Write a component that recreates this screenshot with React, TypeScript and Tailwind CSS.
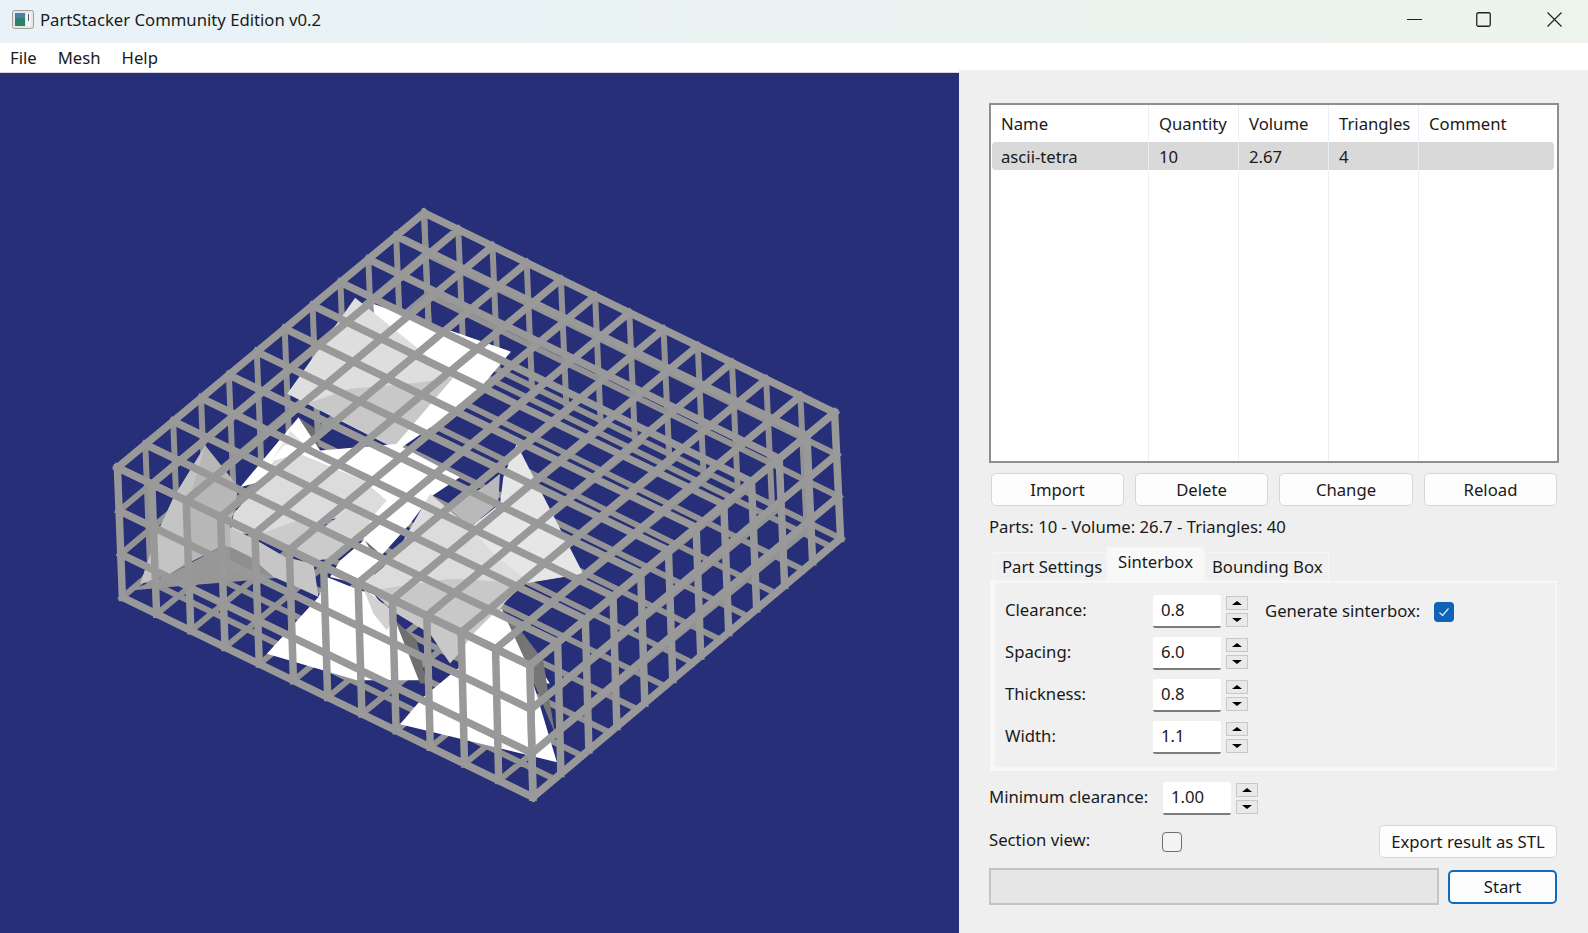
import React from "react";

type P = [number, number];
const mix = (a: P, b: P, t: number): P => [a[0] + (b[0] - a[0]) * t, a[1] + (b[1] - a[1]) * t];

// Draws the bars of one face of the wire cage: a→b is the u edge, d→c the opposite one.
function faceBars(a: P, b: P, c: P, d: P, nu: number, nv: number) {
  const out: string[] = [];
  for (let i = 0; i <= nu; i++) {
    const p = mix(a, b, i / nu);
    const q = mix(d, c, i / nu);
    out.push(`M${p[0]} ${p[1]}L${q[0]} ${q[1]}`);
  }
  for (let j = 0; j <= nv; j++) {
    const p = mix(a, d, j / nv);
    const q = mix(b, c, j / nv);
    out.push(`M${p[0]} ${p[1]}L${q[0]} ${q[1]}`);
  }
  return out.join("");
}

const A: P = [424, 212], B: P = [835, 412], C: P = [530, 665], D: P = [117, 467];
const A2: P = [429, 335], B2: P = [841, 538], C2: P = [533, 797], D2: P = [122, 597];
const A3: P = [422.6, 345.4], B3: P = [831.6, 546.4], C3: P = [526.6, 802], D3: P = [116, 602];

// left part, in 3x coordinates of the area starting at (120,430)
const leftShapes: [string, string][] = [
  ["#b7b7b7", "255,45 355,170 330,290 500,440 390,370 310,345 220,390 150,430 60,460 110,310 160,200"],
  ["#c4c4c4", "255,45 160,200 110,310 60,460 150,430 190,400 200,230"],
  ["#979797", "30,480 150,430 310,345 390,370 500,440 330,455 200,465"],
];

// centre part, in 3x coordinates of the area starting at (230,400)
const centreShapes: [string, string][] = [
  ["#ffffff", "205,50 30,260 100,240 400,250 400,420 450,470 540,370 600,290 690,230 640,205 500,130 270,150"],
  ["#e4e4e4", "180,90 215,125 160,135 125,180"],
  ["#ffffff", "300,530 330,480 400,420 450,470 420,560"],
  ["#dcdcdc", "100,240 130,180 210,160 400,240 470,300 430,345 330,350 130,400 0,400 10,340 60,280"],
  ["#d6d6d6", "280,380 350,330 430,345 400,400 340,440"],
  ["#cbcbcb", "90,400 200,360 300,395 340,440 330,470 260,480 200,450"],
  ["#c6c6c6", "0,380 80,420 165,470 250,490 265,590 200,560 130,530 60,470 0,440"],
  ["#8f8f8f", "0,440 60,470 130,530 60,510 0,490"],
  ["#6f6f6f", "205,50 250,80 270,150"],
  ["#6f6f6f", "405,420 450,460 425,455"],
  // right part
  ["#dcdcdc", "600,280 720,380 1060,520 880,550 830,600 770,680 710,720 640,640 400,550 460,500 520,420"],
  ["#c8c8c8", "420,570 660,535 770,540 880,550 810,620 740,700 660,790 600,700 500,640"],
  ["#e6e6e6", "860,130 1060,520 900,545 800,470 720,380 810,310 820,230"],
  ["#b9b9b9", "810,220 805,310 720,380 650,320 760,260"],
  // front white parts
  ["#ffffff", "265,590 110,760 380,840 570,840 510,680 430,580 390,570 290,530"],
  ["#ffffff", "730,700 790,640 815,625 960,850 690,840 700,740"],
  ["#d2d2d2", "400,565 500,640 470,690 430,640"],
  ["#6f6f6f", "495,660 560,720 590,850 570,850"],
  ["#747474", "815,625 880,700 940,780 950,850 890,790"],
];

// lower right part, full-size coordinates
const frontShapes: [string, string][] = [
  ["#ffffff", "480,650 513,640 530,672 557,762 400,724 423,697"],
  ["#767676", "520,633 543,660 555,733 530,673"],
];

function Cage() {
  const floorLines: string[] = [];
  for (let k = 1; k <= 11; k++) {
    const p = mix(D3, A3, k / 11);
    const q = mix(C3, B3, k / 11);
    floorLines.push(`M${p[0]} ${p[1]}L${q[0]} ${q[1]}`);
  }
  for (let i = 1; i <= 11; i++) {
    const p = mix(D2, C2, i / 12);
    const q = mix(A2, B2, i / 12);
    floorLines.push(`M${p[0]} ${p[1]}L${q[0] + 7} ${q[1] + 3.5}`);
  }
  return (
    <svg viewBox="0 72 959 861" className="block w-full h-full">
      <g fill="none" stroke="#939393" strokeWidth={6} strokeLinecap="square">
        <path d={floorLines.join("")} />
        <path d={faceBars(A, D, D2, A2, 11, 3)} />
        <path d={faceBars(A, B, B2, A2, 12, 3)} />
      </g>
      <g transform="translate(120 430) scale(0.3333)">
        {leftShapes.map(([fill, pts], i) => (
          <polygon key={i} fill={fill} points={pts} />
        ))}
      </g>
      <g transform="translate(285 300)">
        <polygon fill="#ffffff" points="88,3 226,51 185,100 112,150 95,120" />
        <polygon fill="#dedede" points="70,-3 132,47 168,77 108,147 2,93" />
        <polygon fill="#c8c8c8" points="65,88 132,82 168,77 108,147 22,103" />
      </g>
      <g transform="translate(230 400) scale(0.3333)">
        {centreShapes.map(([fill, pts], i) => (
          <polygon key={i} fill={fill} points={pts} />
        ))}
      </g>
      {frontShapes.map(([fill, pts], i) => (
        <polygon key={i} fill={fill} points={pts} />
      ))}
      <g fill="none" stroke="#999999" strokeWidth={7.5} strokeLinecap="square">
        <path d={faceBars(D, C, C2, D2, 12, 3)} />
        <path d={faceBars(C, B, B2, C2, 11, 3)} />
        <path d={faceBars(A, B, C, D, 12, 11)} />
      </g>
    </svg>
  );
}

function Spin({ value }: { value: string }) {
  return (
    <div className="flex gap-[5px] h-[33px]">
      <div className="w-[68px] h-[33px] bg-white border-b-2 border-[#7c7c7c] rounded-[2px] pl-[8px] leading-[29px]">{value}</div>
      <div className="w-[22px] flex flex-col justify-between h-[31px] mt-[1px]">
        <div className="h-[14px] bg-[#e9e9e9] border border-[#c8c8c8] flex items-center justify-center">
          <div className="w-0 h-0 border-x-[5px] border-x-transparent border-b-[4px] border-b-black" />
        </div>
        <div className="h-[14px] bg-[#e9e9e9] border border-[#c8c8c8] flex items-center justify-center">
          <div className="w-0 h-0 border-x-[5px] border-x-transparent border-t-[4px] border-t-black" />
        </div>
      </div>
    </div>
  );
}

function Btn({ label, className }: { label: string; className: string }) {
  return (
    <div className={`h-[33px] bg-[#fdfdfd] border border-[#d6d6d6] rounded-[5px] flex items-center justify-center ${className}`}>
      {label}
    </div>
  );
}

function Column({ width, head, cell, last, first }: { width: string; head: string; cell: string; last?: boolean; first?: boolean }) {
  return (
    <div className={`${width} h-full ${last ? "" : "border-r border-[#e9eff6]"}`}>
      <div className={`h-[37px] flex items-center ${first ? "pl-[9px]" : "pl-[10px]"}`}>{head}</div>
      <div className={`h-[28px] pt-[1px] flex items-center bg-[#d9d9d9] ${first ? "pl-[9px] rounded-l-[4px]" : "pl-[10px]"} ${last ? "rounded-r-[4px]" : ""}`}>{cell}</div>
    </div>
  );
}

export default function App() {
  return (
    <div className="w-[1588px] h-[933px] flex flex-col overflow-hidden bg-[#efefef] text-[16.7px] text-[#1a1a1a] font-['Noto_Sans',sans-serif]">
      <div className="h-[43px] shrink-0 flex items-center bg-gradient-to-r from-[#e8f2f8] to-[#edf4ec] pb-[4px]">
        <svg width="22" height="19" viewBox="0 0 22 19" className="ml-[12px]">
          <rect x="0.5" y="0.5" width="21" height="18" rx="2" fill="#e6e6e6" stroke="#a0a0a0" />
          <rect x="3" y="3" width="10" height="13" fill="#2f7f6f" />
          <rect x="3" y="3" width="10" height="5" fill="#4a7fa8" />
          <rect x="14" y="3" width="5" height="13" fill="#f7f7f7" />
          <rect x="16" y="4" width="1" height="7" fill="#555" />
        </svg>
        <span className="ml-[6px]">PartStacker Community Edition v0.2</span>
        <div className="ml-auto flex items-center mr-[26px]">
          <svg width="15" height="15" viewBox="0 0 15 15"><path d="M0 7.5H15" stroke="#222" strokeWidth="1" /></svg>
          <svg width="15" height="15" viewBox="0 0 15 15" className="ml-[54px]"><rect x="0.75" y="0.75" width="13.5" height="13.5" rx="1.5" fill="none" stroke="#222" strokeWidth="1.3" /></svg>
          <svg width="15" height="15" viewBox="0 0 15 15" className="ml-[56px]"><path d="M0.5 0.5L14.5 14.5M14.5 0.5L0.5 14.5" stroke="#222" strokeWidth="1.2" /></svg>
        </div>
      </div>
      <div className="h-[30px] shrink-0 bg-white flex items-center pl-[10px] gap-[21px] border-b border-[#d8d8d8]">
        <span>File</span>
        <span>Mesh</span>
        <span>Help</span>
      </div>
      <div className="flex-1 flex min-h-0">
        <div className="w-[959px] bg-[#262f78]">
          <Cage />
        </div>
        <div className="flex-1 -mt-[3px] bg-[#efefef] flex flex-col pl-[30px] pr-[29px] pt-[33px]">
          <div className="h-[360px] border-2 border-[#8e8e8e] bg-white flex pl-[1px] pr-[3px]">
            <Column first width="w-[157px]" head="Name" cell="ascii-tetra" />
            <Column width="w-[90px]" head="Quantity" cell="10" />
            <Column width="w-[90px]" head="Volume" cell="2.67" />
            <Column width="w-[90px]" head="Triangles" cell="4" />
            <Column last width="flex-1" head="Comment" cell="" />
          </div>
          <div className="flex mt-[10px] pl-[2px] pr-[2px] gap-[11px]">
            <Btn label="Import" className="w-[133px]" />
            <Btn label="Delete" className="w-[133px]" />
            <Btn label="Change" className="w-[134px]" />
            <Btn label="Reload" className="w-[133px]" />
          </div>
          <div className="mt-[9px] h-[24px] leading-[24px]">Parts: 10 - Volume: 26.7 - Triangles: 40</div>
          <div className="mt-[7px] flex items-end pl-[4px] h-[35px]">
            <div className="w-[114px] h-[29px] bg-[#f0f0f0] border border-[#f6f6f6] pl-[8px] leading-[27px]">Part Settings</div>
            <div className="w-[97px] h-[34px] bg-[#f8f8f8] border border-[#f6f6f6] pl-[10px] leading-[28px]">Sinterbox</div>
            <div className="w-[125px] h-[29px] bg-[#f0f0f0] border border-[#f6f6f6] pl-[7px] leading-[27px]">Bounding Box</div>
          </div>
          <div className="ml-[1px] mr-[2px] h-[190px] bg-[#f0f0f0] border-[#f7f7f7] border-l-[5px] border-t-[2px] border-r-[2px] border-b-[4px] pl-[10px] pt-[12px] flex">
            <div className="flex flex-col gap-[9px] w-[243px]">
              {[["Clearance:", "0.8"], ["Spacing:", "6.0"], ["Thickness:", "0.8"], ["Width:", "1.1"]].map(([l, v]) => (
                <div key={l} className="flex items-center">
                  <span className="w-[149px] pb-[4px]">{l}</span>
                  <Spin value={v} />
                </div>
              ))}
            </div>
            <div className="flex items-center h-[33px] ml-[17px]">
              <span className="pb-[2px]">Generate sinterbox:</span>
              <div className="ml-[14px] w-[20px] h-[20px] rounded-[4px] bg-[#0f62b6] flex items-center justify-center">
                <svg width="12" height="10" viewBox="0 0 12 10"><path d="M1.5 5.5L4.5 8.5L10.5 1.5" fill="none" stroke="#d8e8f8" strokeWidth="1.2" /></svg>
              </div>
            </div>
          </div>
          <div className="flex items-center mt-[11px]">
            <span className="w-[174px] pb-[3px]">Minimum clearance:</span>
            <Spin value="1.00" />
          </div>
          <div className="flex items-center mt-[10px] h-[33px]">
            <span className="w-[173px] pb-[3px]">Section view:</span>
            <div className="w-[20px] h-[20px] rounded-[4px] border border-[#6e6e6e] bg-[#f4f4f4]" />
            <Btn label="Export result as STL" className="ml-auto w-[178px] mr-[2px]" />
          </div>
          <div className="flex mt-[10px] items-start">
            <div className="w-[450px] h-[37px] bg-[#e6e6e6] border-2 border-[#c4c4c4]" />
            <div className="ml-[9px] w-[109px] h-[34px] mt-[2px] bg-[#fdfdfd] border-2 border-[#0f6cbd] rounded-[5px] flex items-center justify-center">Start</div>
          </div>
        </div>
      </div>
    </div>
  );
}
